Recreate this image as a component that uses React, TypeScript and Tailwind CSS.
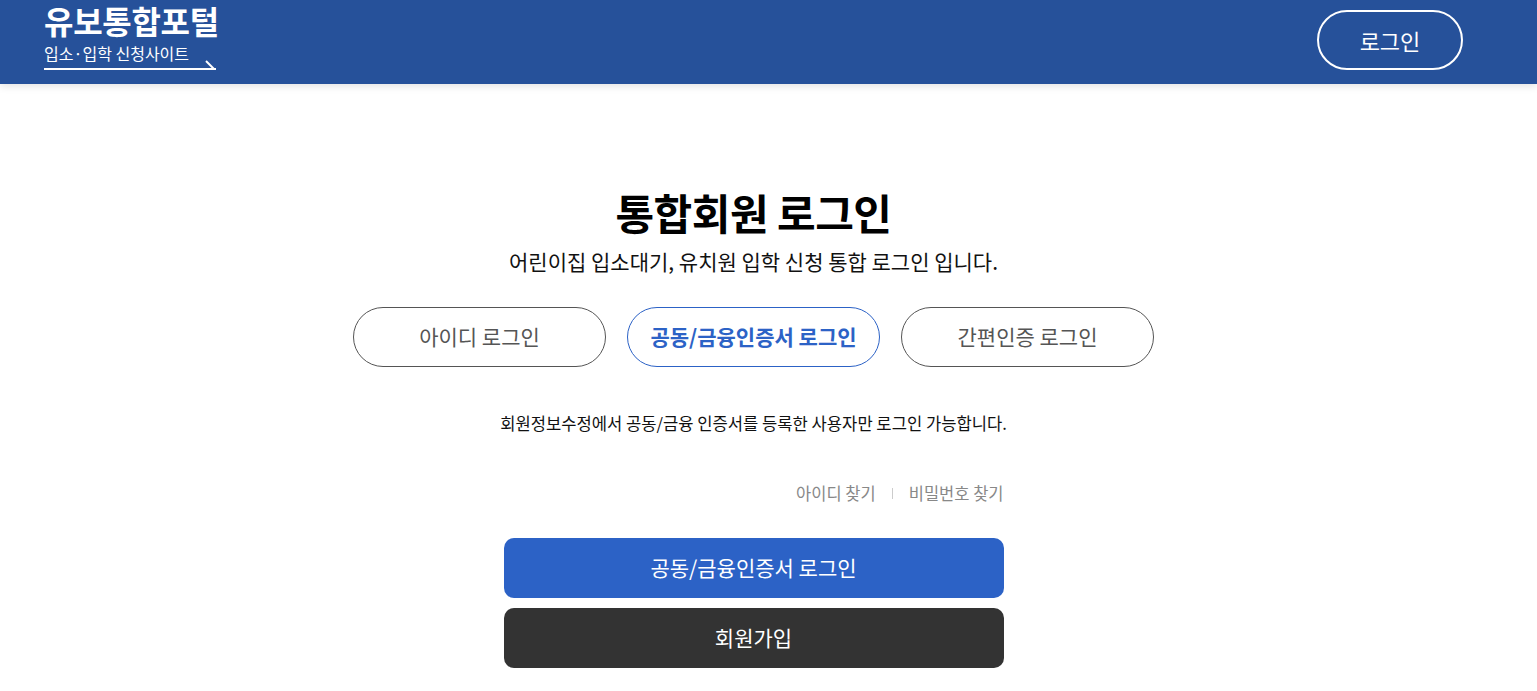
const FONT = "font-['Noto_Sans_CJK_KR','Noto_Sans',sans-serif]";

const TABS = [
  { id: "id", label: "아이디 로그인" },
  { id: "cert", label: "공동/금융인증서 로그인" },
  { id: "simple", label: "간편인증 로그인" },
];

function Header() {
  return (
    <header className="relative z-10 flex h-[84px] items-center justify-between bg-[#26519a] pl-[44px] pr-[74px] shadow-[0_2px_8px_rgba(0,0,0,0.12)]">
      <div className="flex flex-col self-start pt-[2px]">
        <h1 className="text-[32px] font-bold leading-[36px] tracking-[-0.3px] text-white">
          유보통합포털
        </h1>
        <div className="relative mt-[3px] w-[172px] border-b-2 border-white pb-[3px]">
          <span className="text-[16px] leading-[22px] text-white">입소·입학 신청사이트</span>
          <svg
            className="absolute right-0 bottom-[-2px]"
            width="12"
            height="10"
            viewBox="0 0 12 10"
          >
            <path d="M2 1 L10 9" stroke="white" strokeWidth="2" />
          </svg>
        </div>
      </div>
      <button
        type="button"
        className="mt-[-4px] h-[60px] w-[146px] rounded-full border-2 border-white text-[22px] text-white"
      >
        로그인
      </button>
    </header>
  );
}

export default function App() {
  const active = "cert";

  return (
    <div className={`min-h-screen bg-white ${FONT}`}>
      <Header />
      <main className="flex flex-col items-center pr-[30px] pt-[98px]">
        <h2 className="text-[42px] font-bold leading-[60px] tracking-[-0.5px] text-black">
          통합회원 로그인
        </h2>
        <p className="mt-[4px] text-[21px] leading-[30px] text-[#111]">
          어린이집 입소대기, 유치원 입학 신청 통합 로그인 입니다.
        </p>

        <div className="mt-[31px] flex gap-[21px]">
          {TABS.map((tab) => {
            const isActive = tab.id === active;
            return (
              <button
                key={tab.id}
                type="button"
                className={
                  isActive
                    ? "h-[60px] w-[253px] rounded-full border border-[#2c62c6] text-[21px] font-bold text-[#2c62c6]"
                    : "h-[60px] w-[253px] rounded-full border border-[#555] text-[21px] text-[#555]"
                }
              >
                {tab.label}
              </button>
            );
          })}
        </div>

        <p className="mt-[44px] text-[16.6px] leading-[24px] text-[#111]">
          회원정보수정에서 공동/금융 인증서를 등록한 사용자만 로그인 가능합니다.
        </p>

        <div className="mt-[46px] flex w-[500px] items-center justify-end gap-[16px] text-[16.5px] leading-[24px] text-[#888]">
          <a href="#">아이디 찾기</a>
          <span className="h-[11px] w-px bg-[#ccc]" />
          <a href="#">비밀번호 찾기</a>
        </div>

        <div className="mt-[33px] flex w-[500px] flex-col gap-[10px]">
          <button
            type="button"
            className="h-[60px] rounded-[10px] bg-[#2c62c6] text-[21px] text-white"
          >
            공동/금융인증서 로그인
          </button>
          <button
            type="button"
            className="h-[60px] rounded-[10px] bg-[#333333] text-[21px] text-white"
          >
            회원가입
          </button>
        </div>
      </main>
    </div>
  );
}
